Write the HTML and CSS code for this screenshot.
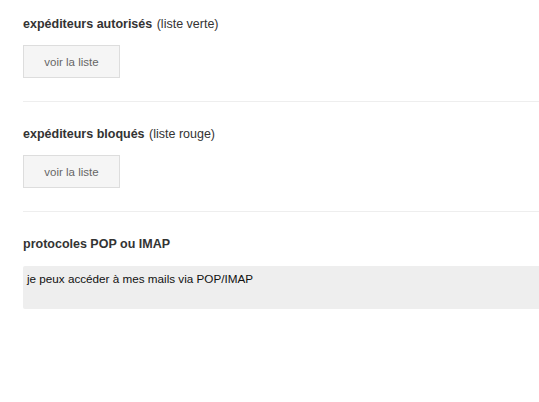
FILE: index.html
```html
<!DOCTYPE html>
<html lang="fr">
<head>
<meta charset="utf-8">
<link rel="stylesheet" href="styles.css">
</head>
<body>
<div class="page">
  <section class="section first">
    <h2 class="title">expéditeurs autorisés <span class="sub">(liste verte)</span></h2>
    <button class="btn" type="button">voir la liste</button>
  </section>
  <section class="section">
    <h2 class="title">expéditeurs bloqués <span class="sub">(liste rouge)</span></h2>
    <button class="btn" type="button">voir la liste</button>
  </section>
  <section class="section last">
    <h2 class="title">protocoles POP ou IMAP</h2>
    <div class="option">je peux accéder à mes mails via POP/IMAP</div>
  </section>
</div>
</body>
</html>
```
FILE: styles.css
```css
html, body {
  margin: 0;
  padding: 0;
  background: #fff;
}
body {
  font-family: "Liberation Sans", Arial, sans-serif;
}
.page {
  padding-left: 23px;
}
.section {
  padding: 24px 0 23px;
  border-bottom: 1px solid #eeeeee;
}
.section.first {
  padding-top: 16px;
}
.section.last {
  border-bottom: none;
}
.title {
  margin: 0 0 13px;
  font-size: 12.5px;
  line-height: 16px;
  font-weight: bold;
  color: #333;
}
.sub {
  font-weight: normal;
  margin-left: 1px;
}
.btn {
  display: block;
  width: 97px;
  height: 33px;
  margin: 0;
  padding: 0;
  border: 1px solid #dddddd;
  background: #f5f5f5;
  color: #666;
  font-family: "Liberation Sans", Arial, sans-serif;
  font-size: 11.5px;
  border-radius: 0;
}
.section.last .title {
  margin-bottom: 14px;
}
.option {
  height: 43px;
  box-sizing: border-box;
  padding: 6px 4px;
  background: #eeeeee;
  border-radius: 2px 0 0 2px;
  font-size: 11.7px;
  line-height: 14px;
  color: #111;
}
```
